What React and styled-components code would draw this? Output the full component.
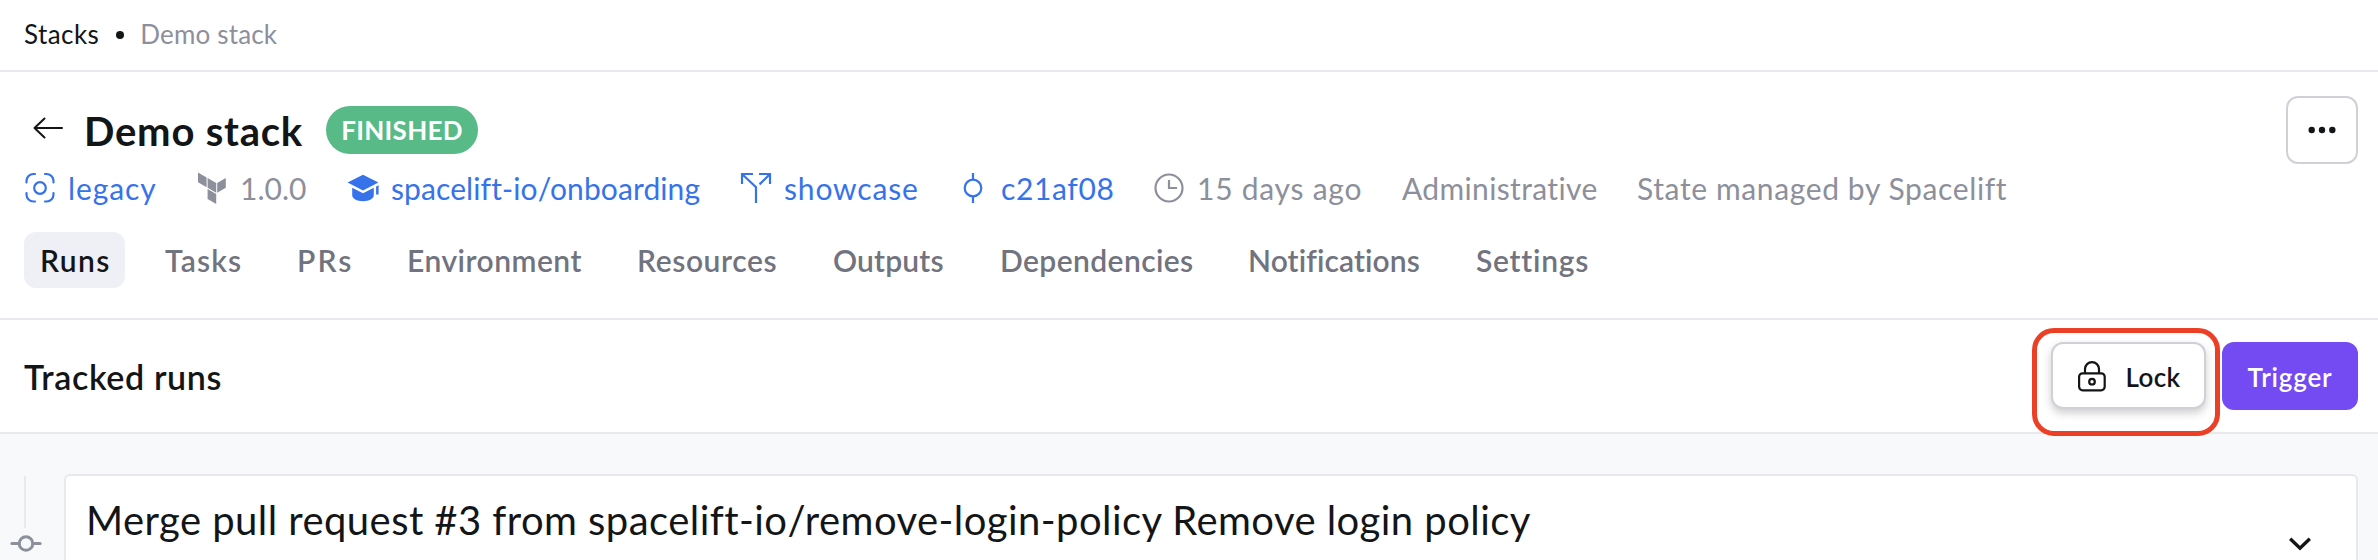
import React from 'react';
import styled, { createGlobalStyle } from 'styled-components';

const ink = '#131517';
const blue = '#3673ea';
const gray = '#8d8f9b';
const line = '#e8e8ed';

const GlobalStyle = createGlobalStyle`
  *, *::before, *::after { box-sizing: border-box; }
  body {
    margin: 0;
    overflow: hidden;
    background: #fff;
    color: ${ink};
    font-family: Lato, "Noto Sans", sans-serif;
  }
  svg { display: block; flex: none; }
  button { font: inherit; color: inherit; margin: 0; padding: 0; }
`;

const Page = styled.div`
  height: 560px;
  display: flex;
  flex-direction: column;
  overflow: hidden;
`;

const Text = styled.span`
  letter-spacing: ${(p) => p.$track || 0}px;
  white-space: nowrap;
`;

const Breadcrumbs = styled.nav`
  display: flex;
  align-items: center;
  height: 72px;
  flex: none;
  padding: 0 24px 2px;
  border-bottom: 2px solid ${line};
  font-size: 26px;
  line-height: 32px;
`;

const Dot = styled.span`
  width: 8px;
  height: 8px;
  margin: 2px 16px 0 17px;
  border-radius: 50%;
  background: ${ink};
`;

const Current = styled(Text)`
  color: ${gray};
`;

const Header = styled.header`
  height: 248px;
  flex: none;
  padding: 24px 20px 0 24px;
  border-bottom: 2px solid ${line};
`;

const TitleRow = styled.div`
  display: flex;
  align-items: flex-start;
  height: 68px;
`;

const BackIcon = styled.svg`
  margin: 16px 0 0 8px;
`;

const Title = styled.h1`
  margin: 11px 23px 0 20px;
  font-size: 40px;
  line-height: 48px;
  font-weight: 700;
  letter-spacing: 0.79px;
`;

const Badge = styled.span`
  display: flex;
  align-items: center;
  justify-content: center;
  width: 152px;
  height: 48px;
  margin-top: 10px;
  padding-bottom: 1px;
  border-radius: 24px;
  background: #58ba87;
  color: #fff;
  font-size: 26px;
  font-weight: 700;
`;

const MoreButton = styled.button`
  display: flex;
  align-items: center;
  justify-content: center;
  width: 72px;
  height: 68px;
  margin-left: auto;
  border: 2px solid #d0d0d7;
  border-radius: 12px;
  background: #fff;
`;

const MetaRow = styled.div`
  display: flex;
  height: 48px;
`;

const Meta = styled.div`
  display: flex;
  align-items: center;
  gap: 12px;
  width: ${(p) => p.$width}px;
  color: ${(p) => (p.$link ? blue : gray)};
  font-size: 30px;
  line-height: 36px;
`;

const Tabs = styled.nav`
  display: flex;
  margin-top: 20px;
  height: 56px;
`;

const Tab = styled.a`
  display: flex;
  align-items: center;
  height: 56px;
  width: ${(p) => p.$width}px;
  margin-right: 24px;
  padding: 0 0 0 ${(p) => p.$inset || 16}px;
  border-radius: 12px;
  background: ${(p) => (p.$active ? '#eff0f5' : 'transparent')};
  color: ${(p) => (p.$active ? ink : '#71737e')};
  font-size: 30px;
  font-weight: 600;
`;

const RunsBar = styled.section`
  display: flex;
  align-items: center;
  height: 114px;
  flex: none;
  padding: 0 20px 0 24px;
  border-bottom: 2px solid ${line};
`;

const SectionTitle = styled.h2`
  margin: 0;
  font-size: 34px;
  font-weight: 600;
  letter-spacing: 0.63px;
`;

const Actions = styled.div`
  display: flex;
  gap: 16px;
  margin-left: auto;
`;

const Button = styled.button`
  display: flex;
  align-items: center;
  justify-content: center;
  height: 68px;
  border-radius: 12px;
  font-size: 26px;
  font-weight: 600;
`;

const LockButton = styled(Button)`
  position: relative;
  width: 155px;
  height: 67px;
  gap: 18px;
  padding: 2px 0 0 1px;
  border: 2px solid #d0d0d7;
  background: #fff;
  box-shadow: 0 4px 8px rgba(0, 0, 0, 0.2);
`;

const TriggerButton = styled(Button)`
  width: 136px;
  padding-top: 1px;
  border: 0;
  background: #744af2;
  color: #fff;
`;

const Highlight = styled.span`
  position: absolute;
  z-index: 1;
  inset: -16px -16px -29px -21px;
  border: 5px solid #eb4026;
  border-radius: 22px;
  pointer-events: none;
`;

const RunList = styled.main`
  flex: 1;
  display: flex;
  align-items: stretch;
  padding: 40px 20px 0 8px;
  background: #f8f9fb;
`;

const Timeline = styled.div`
  display: flex;
  flex-direction: column;
  align-items: center;
  width: 36px;
  margin-right: 20px;
`;

const TimelineBar = styled.div`
  width: 2px;
  height: 52px;
  margin: 2px 2px 6px 0;
  background: ${line};
`;

const RunCard = styled.article`
  flex: 1;
  display: flex;
  align-items: flex-start;
  justify-content: space-between;
  height: 120px;
  padding: 20px 45px 0 20px;
  border: 2px solid ${line};
  border-radius: 6px;
  background: #fff;
`;

const RunTitle = styled.h3`
  margin: 0;
  font-size: 40px;
  line-height: 48px;
  font-weight: 400;
  letter-spacing: 0.44px;
  white-space: nowrap;
`;

const Chevron = styled.svg`
  margin-top: 41px;
`;

const icons = {
  module: (
    <g fill="none" stroke="currentColor" strokeWidth="2.2" strokeLinecap="round">
      <circle cx="16" cy="16" r="5.8" />
      <path d="M2.5 10.5V9a7 7 0 0 1 7-7H11M21 2h1.5a7 7 0 0 1 7 7v1.5M29.5 21v1.5a7 7 0 0 1-7 7H21M11 29.5H9.5a7 7 0 0 1-7-7V21" />
    </g>
  ),
  terraform: (
    <path
      fill="currentColor"
      d="M2 0.5l8.6 5v9.8L2 10.3zM11.6 6l8.6 5v9.8l-8.6-5zM29.8 6v9.8l-8.6 5V11zM11.6 17l8.6 5v9.9l-8.6-5z"
    />
  ),
  repo: (
    <g fill="currentColor">
      <path d="M16 2.8L.6 10.6 16 18.5l15.4-7.9z" />
      <path d="M5.2 15.8v7.5c0 3.3 4.6 5.9 10.8 5.9s10.8-2.6 10.8-5.9v-7.5L16 21.2z" />
      <path d="M29.1 14.4l2.5-1.2v9.4h-2.5z" />
    </g>
  ),
  branch: (
    <g fill="none" stroke="currentColor" strokeWidth="2.2">
      <path d="M2 12V2h11M2 2l14 13.3V31M19 2h11v10M30 2L19.5 12.4" />
    </g>
  ),
  commit: (
    <g fill="none" stroke="currentColor" strokeWidth="2.2">
      <circle cx="16" cy="16" r="8.3" />
      <path d="M16 1v6.7M16 24.3V31" />
    </g>
  ),
  clock: (
    <g fill="none" stroke="currentColor" strokeWidth="2.2">
      <circle cx="16" cy="16" r="13.5" />
      <path d="M16 8v8h8" />
    </g>
  ),
};

const Icon = ({ name }) => (
  <svg width="32" height="32" viewBox="0 0 32 32">
    {icons[name]}
  </svg>
);

const META = [
  { icon: 'module', label: 'legacy', link: true, width: 172, track: 0.9 },
  { icon: 'terraform', label: '1.0.0', width: 151, track: 0 },
  { icon: 'repo', label: 'spacelift-io/onboarding', link: true, width: 393, track: 0.1 },
  { icon: 'branch', label: 'showcase', link: true, width: 217, track: 0.84 },
  { icon: 'commit', label: 'c21af08', link: true, width: 196, track: 0.63 },
  { icon: 'clock', label: '15 days ago', width: 249, track: 0.75 },
  { label: 'Administrative', width: 235, track: 0.36 },
  { label: 'State managed by Spacelift', width: 400, track: 0.62 },
];

const TABS = [
  { label: 'Runs', width: 101, track: 1.4 },
  { label: 'Tasks', width: 107, track: 1.15 },
  { label: 'PRs', width: 87, track: 2.1, inset: 17 },
  { label: 'Environment', width: 205, track: 0.5 },
  { label: 'Resources', width: 172, track: 0.6, inset: 17 },
  { label: 'Outputs', width: 143, track: 0.17, inset: 17 },
  { label: 'Dependencies', width: 224, track: 0.4, inset: 17 },
  { label: 'Notifications', width: 204, track: 0.1, inset: 17 },
  { label: 'Settings', width: 150, track: 0.75, inset: 17 },
];

export default function App() {
  return (
    <Page>
      <GlobalStyle />
      <Breadcrumbs>
        <Text $track={0.44}>Stacks</Text>
        <Dot />
        <Current $track={0.17}>Demo stack</Current>
      </Breadcrumbs>
      <Header>
        <TitleRow>
          <BackIcon width="32" height="32" viewBox="0 0 32 32" fill="none" stroke={ink} strokeWidth="2" strokeLinecap="round" strokeLinejoin="round">
            <path d="M30 16H2.5M12.5 6.5L2.5 16l10 9.5" />
          </BackIcon>
          <Title>Demo stack</Title>
          <Badge>
            <Text $track={0.3}>FINISHED</Text>
          </Badge>
          <MoreButton aria-label="More">
            <svg width="32" height="8" viewBox="0 0 32 8" fill={ink}>
              <circle cx="5.7" cy="4" r="3.2" />
              <circle cx="16" cy="4" r="3.2" />
              <circle cx="26.3" cy="4" r="3.2" />
            </svg>
          </MoreButton>
        </TitleRow>
        <MetaRow>
          {META.map((m) => (
            <Meta key={m.label} $width={m.width} $link={m.link}>
              {m.icon && <Icon name={m.icon} />}
              <Text $track={m.track}>{m.label}</Text>
            </Meta>
          ))}
        </MetaRow>
        <Tabs>
          {TABS.map((t, i) => (
            <Tab key={t.label} $width={t.width} $inset={t.inset} $active={i === 0}>
              <Text $track={t.track}>{t.label}</Text>
            </Tab>
          ))}
        </Tabs>
      </Header>
      <RunsBar>
        <SectionTitle>Tracked runs</SectionTitle>
        <Actions>
          <LockButton>
            <svg width="30" height="32" viewBox="0 0 30 32" fill="none" stroke={ink} strokeWidth="2.2">
              <rect x="2.1" y="12.3" width="25.6" height="17" rx="3.5" />
              <path d="M8 12.3V8.1a7 7 0 0 1 14 0v4.2" />
              <circle cx="15" cy="20.7" r="2.8" />
            </svg>
            <Text $track={0.37}>Lock</Text>
            <Highlight />
          </LockButton>
          <TriggerButton>
            <Text $track={0.8}>Trigger</Text>
          </TriggerButton>
        </Actions>
      </RunsBar>
      <RunList>
        <Timeline>
          <TimelineBar />
          <svg width="32" height="18" viewBox="0 0 32 18" fill="none" stroke={gray} strokeWidth="3" strokeLinecap="round">
            <circle cx="16" cy="9.5" r="6.8" />
            <path d="M1.8 9.5H9M23 9.5h7.2" />
          </svg>
        </Timeline>
        <RunCard>
          <RunTitle>Merge pull request #3 from spacelift-io/remove-login-policy Remove login policy</RunTitle>
          <Chevron width="22" height="14" viewBox="0 0 22 14" fill="none" stroke={ink} strokeWidth="3.4">
            <path d="M1.2 1.7L11 11.2l9.8-9.5" />
          </Chevron>
        </RunCard>
      </RunList>
    </Page>
  );
}
